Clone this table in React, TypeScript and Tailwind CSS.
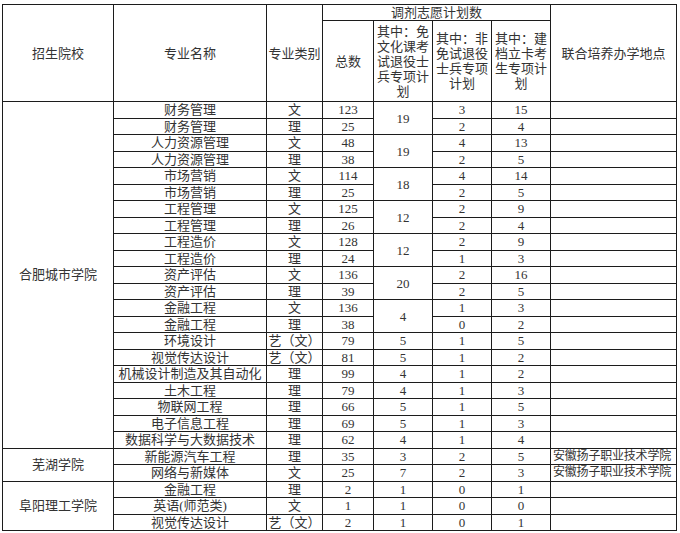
import React from "react";

type Row = {
  name: string;
  type: string;
  total: string;
  mian?: string;
  span?: number;
  fei: string;
  jian: string;
  place?: string;
};

const rows: Row[] = [
  { name: "财务管理", type: "文", total: "123", mian: "19", span: 2, fei: "3", jian: "15" },
  { name: "财务管理", type: "理", total: "25", fei: "2", jian: "4" },
  { name: "人力资源管理", type: "文", total: "48", mian: "19", span: 2, fei: "4", jian: "13" },
  { name: "人力资源管理", type: "理", total: "38", fei: "2", jian: "5" },
  { name: "市场营销", type: "文", total: "114", mian: "18", span: 2, fei: "4", jian: "14" },
  { name: "市场营销", type: "理", total: "25", fei: "2", jian: "5" },
  { name: "工程管理", type: "文", total: "125", mian: "12", span: 2, fei: "2", jian: "9" },
  { name: "工程管理", type: "理", total: "26", fei: "2", jian: "4" },
  { name: "工程造价", type: "文", total: "128", mian: "12", span: 2, fei: "2", jian: "9" },
  { name: "工程造价", type: "理", total: "24", fei: "1", jian: "3" },
  { name: "资产评估", type: "文", total: "136", mian: "20", span: 2, fei: "2", jian: "16" },
  { name: "资产评估", type: "理", total: "39", fei: "2", jian: "5" },
  { name: "金融工程", type: "文", total: "136", mian: "4", span: 2, fei: "1", jian: "3" },
  { name: "金融工程", type: "理", total: "38", fei: "0", jian: "2" },
  { name: "环境设计", type: "艺（文）", total: "79", mian: "5", span: 1, fei: "1", jian: "5" },
  { name: "视觉传达设计", type: "艺（文）", total: "81", mian: "5", span: 1, fei: "1", jian: "2" },
  { name: "机械设计制造及其自动化", type: "理", total: "99", mian: "4", span: 1, fei: "1", jian: "2" },
  { name: "土木工程", type: "理", total: "79", mian: "4", span: 1, fei: "1", jian: "3" },
  { name: "物联网工程", type: "理", total: "66", mian: "5", span: 1, fei: "1", jian: "5" },
  { name: "电子信息工程", type: "理", total: "69", mian: "5", span: 1, fei: "1", jian: "3" },
  { name: "数据科学与大数据技术", type: "理", total: "62", mian: "4", span: 1, fei: "1", jian: "4" },
  { name: "新能源汽车工程", type: "理", total: "35", mian: "3", span: 1, fei: "2", jian: "5", place: "安徽扬子职业技术学院" },
  { name: "网络与新媒体", type: "文", total: "25", mian: "7", span: 1, fei: "2", jian: "3", place: "安徽扬子职业技术学院" },
  { name: "金融工程", type: "理", total: "2", mian: "1", span: 1, fei: "0", jian: "1" },
  { name: "英语(师范类)", type: "文", total: "1", mian: "1", span: 1, fei: "0", jian: "0" },
  { name: "视觉传达设计", type: "艺（文）", total: "2", mian: "1", span: 1, fei: "0", jian: "1" },
];

const schools: Record<number, { name: string; span: number }> = {
  0: { name: "合肥城市学院", span: 21 },
  21: { name: "芜湖学院", span: 2 },
  23: { name: "阜阳理工学院", span: 3 },
};

const cell = "border border-[#1c1c1c] p-0 text-center align-middle";

export default function App() {
  return (
    <div
      className="bg-white w-[680px] h-[533px] pt-[4px] pl-[2px] text-[#333333] text-[13px] leading-[15px]"
      style={{ fontFamily: '"Liberation Serif", "Noto Sans CJK SC", serif' }}
    >
      <table className="table-fixed border-collapse w-[674px]">
        <colgroup>
          <col className="w-[111px]" />
          <col className="w-[153px]" />
          <col className="w-[56px]" />
          <col className="w-[51px]" />
          <col className="w-[59px]" />
          <col className="w-[59px]" />
          <col className="w-[59px]" />
          <col className="w-[126px]" />
        </colgroup>
        <thead>
          <tr className="h-[16px]">
            <th rowSpan={2} className={`${cell} font-normal`}>招生院校</th>
            <th rowSpan={2} className={`${cell} font-normal`}>专业名称</th>
            <th rowSpan={2} className={`${cell} font-normal`}>专业类别</th>
            <th colSpan={4} className={`${cell} font-normal`}>调剂志愿计划数</th>
            <th rowSpan={2} className={`${cell} font-normal`}>联合培养办学地点</th>
          </tr>
          <tr className="h-[81px]">
            <th className={`${cell} font-normal`}>总数</th>
            <th className={`${cell} font-normal`}>
              其中：免<br />文化课考<br />试退役士<br />兵专项计<br />划
            </th>
            <th className={`${cell} font-normal`}>
              其中：非<br />免试退役<br />士兵专项<br />计划
            </th>
            <th className={`${cell} font-normal`}>
              其中：建<br />档立卡考<br />生专项计<br />划
            </th>
          </tr>
        </thead>
        <tbody>
          {rows.map((r, i) => (
            <tr key={i} className="h-[16.5px]">
              {schools[i] && (
                <td rowSpan={schools[i].span} className={cell}>
                  {schools[i].name}
                </td>
              )}
              <td className={`${cell} whitespace-nowrap`}>{r.name}</td>
              <td className={cell}>{r.type}</td>
              <td className={cell}>{r.total}</td>
              {r.mian !== undefined && (
                <td rowSpan={r.span} className={cell}>
                  {r.mian}
                </td>
              )}
              <td className={cell}>{r.fei}</td>
              <td className={cell}>{r.jian}</td>
              <td className={`${cell} text-left pl-[2px] text-[12px] tracking-[-0.2px] whitespace-nowrap`}>
                {r.place ?? ""}
              </td>
            </tr>
          ))}
        </tbody>
      </table>
    </div>
  );
}
